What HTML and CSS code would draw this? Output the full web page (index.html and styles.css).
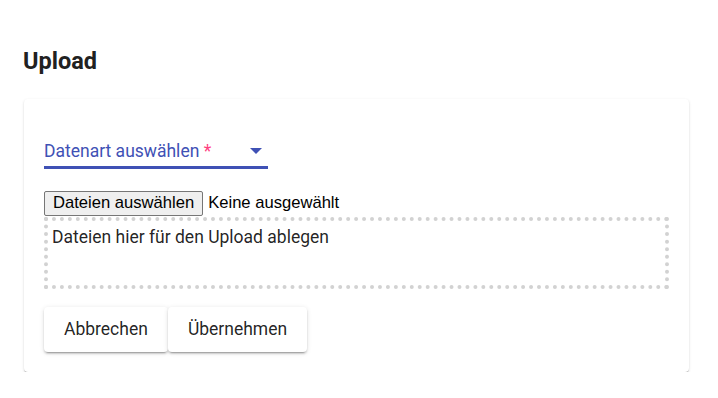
FILE: index.html
```html
<!DOCTYPE html>
<html lang="de">
<head>
<meta charset="utf-8">
<title>Upload</title>
<link rel="stylesheet" href="styles.css">
</head>
<body>
<main class="page">
  <h1 class="title">Upload</h1>
  <section class="card">
    <div class="select-field">
      <div class="select-row">
        <span class="select-label">Datenart auswählen<span class="req"> *</span></span>
        <span class="arrow"></span>
      </div>
      <div class="underline"></div>
    </div>
    <div class="file-row">
      <button class="file-btn" type="button">Dateien auswählen</button>
      <span class="file-status">Keine ausgewählt</span>
    </div>
    <div class="dropzone">Dateien hier für den Upload ablegen</div>
    <div class="actions">
      <button class="btn" type="button">Abbrechen</button>
      <button class="btn" type="button">Übernehmen</button>
    </div>
  </section>
</main>
</body>
</html>
```
FILE: styles.css
```css
* { box-sizing: border-box; }
html, body { margin: 0; padding: 0; background: #fff; }
body { font-family: Roboto, "Noto Sans", sans-serif; color: rgba(0,0,0,0.87); }
.page { padding: 45px 29px 0 24px; }
.title {
  margin: 0 0 0 -1px;
  font-size: 23.5px;
  font-weight: 700;
  line-height: 32px;
  color: #212121;
}
.card {
  margin-top: 22px;
  background: #fff;
  border-radius: 4px;
  box-shadow: 0 2px 1px -1px rgba(0,0,0,.2), 0 1px 1px 0 rgba(0,0,0,.14), 0 1px 3px 0 rgba(0,0,0,.12);
  padding: 21px 20px 20px 20px;
}
.select-field { width: 224px; padding-top: 20px; }
.select-row { display: flex; align-items: center; justify-content: space-between; height: 22px; }
.select-label { font-size: 17.5px; color: #3f51b5; }
.req { color: #ff4081; }
.arrow {
  width: 0; height: 0;
  border-left: 6px solid transparent;
  border-right: 6px solid transparent;
  border-top: 6px solid #3f51b5;
  margin-right: 6px;
}
.underline { height: 2.5px; background: #3f51b5; margin-top: 4px; }
.file-row { display: flex; align-items: center; margin-top: 22px; font-family: "Liberation Sans", Arial, sans-serif; font-size: 16.6px; color: #000; }
.file-btn {
  font-family: "Liberation Sans", Arial, sans-serif;
  font-size: 16.6px;
  height: 25px;
  padding: 0 8px;
  background: #efefef;
  border: 1px solid #767676;
  border-radius: 2px;
  color: #000;
  margin: 0 5px 0 0;
}
.file-status { line-height: 20px; }
.dropzone {
  margin-top: 1px;
  height: 72px;
  border: 4px dotted #d2d2d2;
  padding: 5px 4px;
  font-size: 17.5px;
  line-height: 22px;
  color: rgba(0,0,0,0.87);
}
.actions { display: flex; margin-top: 18px; }
.btn {
  font-family: Roboto, sans-serif;
  font-size: 17.5px;
  font-weight: 400;
  height: 45px;
  padding: 0 20px;
  border: none;
  border-radius: 4px;
  background: #fff;
  color: rgba(0,0,0,0.87);
  box-shadow: 0 3px 1px -2px rgba(0,0,0,.2), 0 2px 2px 0 rgba(0,0,0,.14), 0 1px 5px 0 rgba(0,0,0,.12);
}
```
